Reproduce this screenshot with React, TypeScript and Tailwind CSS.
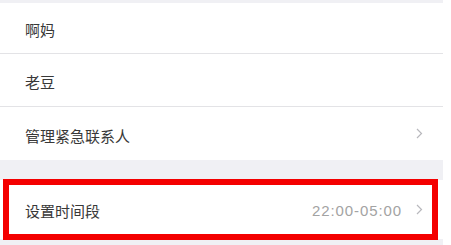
import React from "react";

function Chevron() {
  return (
    <svg width="7" height="11" viewBox="0 0 7 11" className="shrink-0">
      <polyline points="1,1 5.5,5.5 1,10" fill="none" stroke="#b8b8bd" strokeWidth="1.2" />
    </svg>
  );
}

function Row({ label, value, chevron, border, h, pt }: { label: string; value?: string; chevron?: boolean; border?: boolean; h: string; pt: string }) {
  return (
    <div className={`flex items-center bg-white pl-[25px] pr-[20px] ${h} ${border ? "border-b border-[#e3e3e6]" : ""}`}>
      <span className={`flex-1 ${pt} text-[15px] leading-none text-[#383838]`}>{label}</span>
      {value && (
        <span
          className={`mr-[14px] ${pt} text-[15px] leading-none tracking-[0.9px] text-[#a3a3a3]`}
          style={{ fontFamily: '"Liberation Sans", Arial, sans-serif' }}
        >
          {value}
        </span>
      )}
      {chevron && <Chevron />}
    </div>
  );
}

export default function App() {
  return (
    <div
      className="flex h-[245px] w-[451px] bg-white"
      style={{ fontFamily: '"Noto Sans CJK SC", "Noto Sans", sans-serif' }}
    >
      <div className="flex w-[443px] flex-col bg-[#f0f0f4]">
        <div className="h-[3px]" />
        <Row label="啊妈" border h="h-[51px]" pt="pt-[3px]" />
        <Row label="老豆" border h="h-[53px]" pt="pt-[3px]" />
        <Row label="管理紧急联系人" chevron h="h-[53px]" pt="pt-[3px]" />
        <div className="h-[20px]" />
        <div className="relative">
          <Row label="设置时间段" value="22:00-05:00" chevron h="h-[59px]" pt="pt-[1px]" />
          <div className="absolute left-[3px] top-[-1px] h-[61px] w-[435px] border-[6px] border-[#f40000]" />
        </div>
      </div>
    </div>
  );
}
